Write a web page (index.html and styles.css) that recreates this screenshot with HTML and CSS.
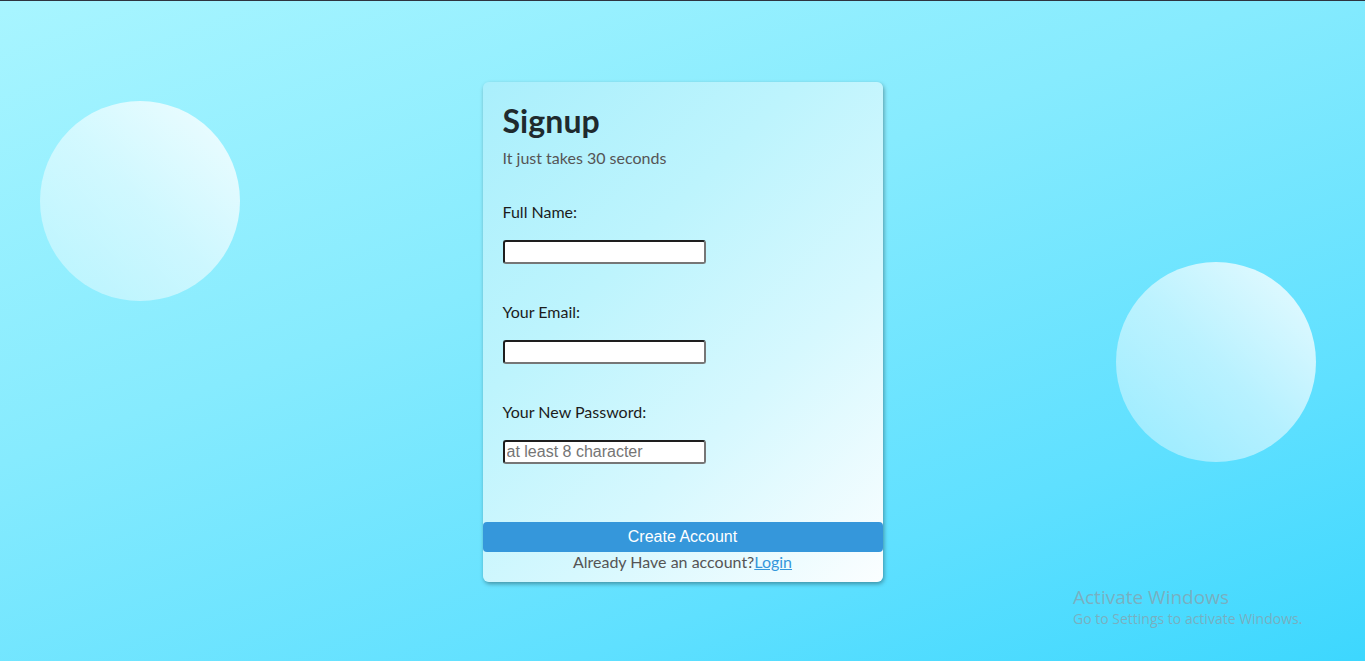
FILE: index.html
```html
<!DOCTYPE html>
<html lang="en">
<head>
<meta charset="utf-8">
<title>Signup</title>
<link rel="stylesheet" href="styles.css">
</head>
<body>
<div class="page">
  <div class="bubble bubble-left"></div>
  <div class="bubble bubble-right"></div>
  <form class="card">
    <div class="card-body">
      <h1 class="title">Signup</h1>
      <p class="subtitle">It just takes 30 seconds</p>
      <div class="field">
        <label class="label" for="name">Full Name:</label>
        <input class="input" id="name" type="text">
      </div>
      <div class="field">
        <label class="label" for="email">Your Email:</label>
        <input class="input" id="email" type="email">
      </div>
      <div class="field">
        <label class="label" for="pw">Your New Password:</label>
        <input class="input" id="pw" type="password" placeholder="at least 8 character">
      </div>
    </div>
    <button class="submit" type="button">Create Account</button>
    <p class="footer">Already Have an account?<a class="link" href="#">Login</a></p>
  </form>
  <div class="watermark">
    <div class="wm-title">Activate Windows</div>
    <div class="wm-sub">Go to Settings to activate Windows.</div>
  </div>
</div>
</body>
</html>
```
FILE: styles.css
```css
html, body {
  margin: 0;
  padding: 0;
  height: 100%;
}
body {
  font-family: Lato, "Noto Sans", sans-serif;
  overflow: hidden;
}
.page {
  position: relative;
  height: 660px;
  border-top: 1px solid #2e3440;
  background: linear-gradient(160deg, #a8f5ff 0%, #86ebfe 40%, #5fe0ff 75%, #3dd7fe 100%);
  display: flex;
  justify-content: center;
  align-items: flex-start;
}
.bubble {
  position: absolute;
  width: 200px;
  height: 200px;
  border-radius: 50%;
  background: linear-gradient(to bottom left, rgba(255,255,255,0.85) 0%, rgba(255,255,255,0.55) 50%, rgba(255,255,255,0.35) 100%);
}
.bubble-left {
  left: 40px;
  top: 100px;
}
.bubble-right {
  left: 1116px;
  top: 261px;
}
.card {
  position: relative;
  margin-top: 81px;
  width: 400px;
  height: 500px;
  box-sizing: border-box;
  border-radius: 6px;
  background: linear-gradient(135deg, #aaeffc 0%, #bdf4fd 35%, #d6f8fe 65%, #fbfeff 100%);
  box-shadow: 1px 2px 4px rgba(0,0,0,0.35);
  padding: 20px 0 0;
  display: flex;
  flex-direction: column;
}
.card-body {
  padding: 0 20px;
}
.title {
  margin: 0;
  font-size: 32px;
  font-weight: 700;
  color: #1f2a2e;
  line-height: 38px;
  letter-spacing: 0.1px;
}
.subtitle {
  margin: 8px 0 0;
  font-size: 16px;
  line-height: 19px;
  color: #555;
}
.field {
  display: flex;
  flex-direction: column;
  align-items: flex-start;
  margin-top: 35px;
}
.field + .field {
  margin-top: 38px;
}
.label {
  font-size: 16px;
  line-height: 19px;
  color: #1c1c1c;
  margin-bottom: 19px;
}
.input {
  width: 203px;
  height: 24px;
  box-sizing: border-box;
  margin: 0;
  padding: 1px 2px;
  border: 2px solid;
  border-color: #1e1e1e #767676 #767676 #1e1e1e;
  border-radius: 3px;
  background: #fff;
  font-family: "Liberation Sans", Arial, sans-serif;
  font-size: 16px;
  color: #000;
  outline: none;
}
.input::placeholder {
  color: #757575;
}
.submit {
  margin-top: auto;
  width: 100%;
  height: 30px;
  border: none;
  border-radius: 4px;
  background: #3597db;
  color: #fff;
  font-family: "Liberation Sans", Arial, sans-serif;
  font-size: 16px;
  padding: 0;
  cursor: pointer;
}
.footer {
  margin: 0 0 10px;
  height: 20px;
  text-align: center;
  font-size: 16px;
  line-height: 20px;
  color: #555;
}
.link {
  color: #3597db;
  text-decoration: underline;
}
.watermark {
  position: absolute;
  left: 1073px;
  top: 584px;
  font-family: "Open Sans", "Noto Sans", sans-serif;
  color: rgba(140,155,165,0.7);
}
.wm-title {
  font-size: 19px;
  line-height: 24px;
}
.wm-sub {
  font-size: 14px;
  line-height: 19px;
}
```
